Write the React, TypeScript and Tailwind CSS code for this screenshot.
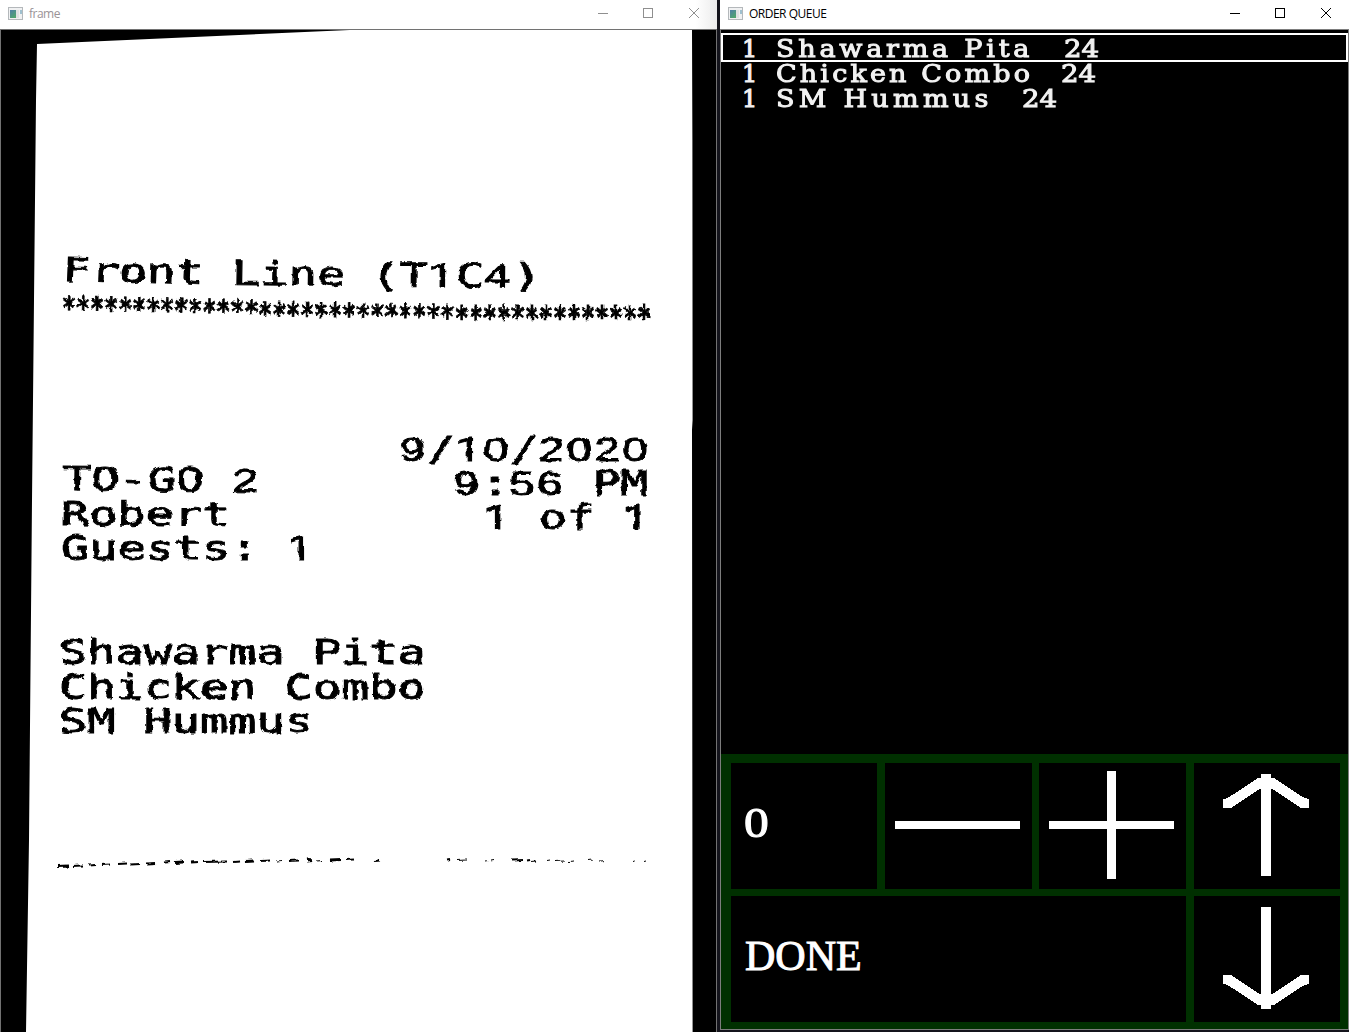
import type { ReactNode } from 'react';

function WindowIcon() {
  return (
    <svg width="16" height="14" viewBox="0 0 16 14" className="shrink-0" shapeRendering="crispEdges">
      <defs>
        <linearGradient id="pane" x1="0" y1="0" x2="0.6" y2="1">
          <stop offset="0" stopColor="#4f7fa8" />
          <stop offset="1" stopColor="#4fa56f" />
        </linearGradient>
      </defs>
      <rect x="0" y="0" width="15" height="13" fill="#b4b8bb" />
      <rect x="1" y="1" width="13" height="11" fill="#f0f1f2" />
      <rect x="2" y="3" width="6" height="8" fill="url(#pane)" />
      <rect x="8" y="3" width="3" height="8" fill="#dfe1e3" />
      <rect x="12" y="3" width="2" height="4" fill="#9fc0cf" />
    </svg>
  );
}

function TitleBar({ title, active }: { title: string; active?: boolean }) {
  return (
    <div
      className={
        active
          ? 'flex h-[29px] shrink-0 items-start bg-white text-black'
          : 'flex h-[29px] shrink-0 items-start bg-[linear-gradient(90deg,#ffffff_97%,#ececec_100%)] text-[#9a9396]'
      }
    >
      <div className="flex h-[27px] items-center gap-[5px] pl-2">
        <WindowIcon />
        <span className='text-[12px] tracking-[-0.5px] font-["Open_Sans",sans-serif]'>{title}</span>
      </div>
      <svg
        width="106"
        height="27"
        viewBox="0 0 106 27"
        className={active ? 'ml-auto mr-[14px]' : 'ml-auto mr-[14px] text-[#8f8f8f]'}
        fill="none"
        stroke="currentColor"
      >
        <path d="M1 13.5H11" />
        <rect x="46.5" y="8.5" width="9" height="9" />
        <path d="M92 8l10 10M102 8l-10 10" />
      </svg>
    </div>
  );
}

/** A run of plain digits, spaced to the pitch of the surrounding monospace text. */
function N({ children }: { children: ReactNode }) {
  return <span className='tracking-[0.046em] font-["Liberation_Sans",sans-serif]'>{children}</span>;
}

/** The digit one, drawn without a foot. */
function One() {
  return <span className='tracking-[0.04em] font-["Roboto",sans-serif]'>1</span>;
}

const print =
  'block w-fit origin-left scale-x-[1.42] whitespace-pre font-["DejaVu_Sans_Mono",monospace] text-[33px] leading-[34.5px] [-webkit-text-stroke:0.9px_black]';
const printRight =
  'block w-fit origin-right scale-x-[1.4] whitespace-pre font-["DejaVu_Sans_Mono",monospace] text-[33px] leading-[34px] [-webkit-text-stroke:0.9px_black]';

const perforation: [number, number, number, number][] = [
  [18, 29, 25, 3], [33, 43, 24.5, 2], [48, 55, 24, 2], [62, 70, 23.5, 2], [78, 87, 22.5, 2], [90, 99, 23, 2],
  [106, 115, 22, 2], [125, 130, 21, 2], [135, 143, 21, 3], [151, 159, 20.5, 3], [163, 187, 20.5, 2],
  [193, 200, 20.5, 2], [206, 214, 20, 3], [221, 230, 19.5, 2], [236, 242, 19.5, 1], [249, 258, 19.5, 2],
  [267, 272, 19, 4], [277, 283, 19.5, 1], [290, 301, 18.5, 3], [306, 314, 18.5, 2], [334, 339, 19.5, 2],
  [408, 411, 19, 2], [417, 426, 19, 1], [445, 448, 19.5, 1], [450, 453, 18.5, 1], [472, 482, 19, 2],
  [487, 490, 19, 2], [491, 496, 19.5, 2], [507, 510, 19, 1], [514, 525, 20, 1], [528, 534, 20, 1],
  [548, 552, 19, 1], [560, 564, 19.5, 1], [592, 594, 20, 1], [605, 607, 20, 1],
];

function FrameWindow() {
  return (
    <section className="flex h-full w-[717px] shrink-0 flex-col">
      <TitleBar title="frame" />
      <div className="relative flex-1 overflow-hidden border-l border-r border-t border-[#727272] bg-black text-black">
        <svg className="absolute left-0 top-0" width="715" height="1002" viewBox="1 30 715 1002">
          <defs>
            <filter id="rough" x="0" y="0" width="100%" height="100%">
              <feTurbulence type="fractalNoise" baseFrequency="0.15" numOctaves="2" seed="4" result="noise" />
              <feDisplacementMap in="SourceGraphic" in2="noise" scale="4" xChannelSelector="R" yChannelSelector="G" />
            </filter>
          </defs>
          <path d="M37 44 L372 29 H692 L692.4 140 L692.6 420 L692 430 L692.6 1032 H26 L29 840 L32 500 L34 300 L36 100Z" fill="#fff" />
        </svg>
        <div className="relative flex flex-col [filter:url(#rough)]">
          <div className="mt-[223px] ml-[61px] h-[36px]">
            <div className={print}>
              <span className="inline-block origin-bottom-left rotate-[1.6deg]">Front</span>
              <span className="inline-block translate-x-[1px] translate-y-[4px] rotate-[0.7deg]"> Line</span>
              <span className="inline-block translate-x-[-1px] translate-y-[6px] rotate-[0.3deg]">
                {' (T'}<One />C<N>4</N>)
              </span>
            </div>
          </div>
          <div className="mt-[4px] ml-[61px] h-[37px]">
            <div className='flex w-fit scale-y-[1.35] whitespace-pre font-["DejaVu_Sans_Mono",monospace] text-[23.3px] font-bold leading-[34px] [-webkit-text-stroke:0.6px_black]'>
              <span className="inline-block rotate-[0.9deg]">**************</span>
              <span className="inline-block translate-y-[4px] rotate-[0.5deg]">**************</span>
              <span className="inline-block translate-y-[5px]">**************</span>
            </div>
          </div>
          <div className="mt-[103px] flex h-[140px] justify-between pl-[60px] pr-[66px]">
            <div className="pt-[29px]">
              <div className={print + ' ml-[2px] rotate-[0.6deg]'}>TO-GO <N>2</N></div>
              <div className={print + ' rotate-[0.3deg]'}>Robert</div>
              <div className={print + ' translate-y-[1px]'}>Guests: <One /></div>
            </div>
            <div className="flex flex-col items-end">
              <div className={printRight}><N>9</N>/<One /><N>0</N>/<N>2020</N></div>
              <div className={printRight + ' -translate-x-[2px]'}><N>9</N>:<N>56</N> PM</div>
              <div className={printRight}><One /> of <One /></div>
            </div>
          </div>
          <div className="mt-[63px] ml-[58px] h-[104px]">
            <div className={print}>Shawarma Pita</div>
            <div className={print}>Chicken Combo</div>
            <div className={print}>SM Hummus</div>
          </div>
          <svg className="mt-[101px] ml-[39px]" width="640" height="50" viewBox="0 0 640 50" stroke="#000">
            {perforation.map(([a, b, y, w]) => (
              <path key={a} d={`M${a} ${y + 0.5}L${b} ${y}`} strokeWidth={w} />
            ))}
          </svg>
        </div>
      </div>
    </section>
  );
}

const orders = [
  { qty: '1', name: 'Shawarma Pita', left: '24', fit: 'w-[288px] tracking-[3.35px]' },
  { qty: '1', name: 'Chicken Combo', left: '24', fit: 'w-[285px] tracking-[2.8px]' },
  { qty: '1', name: 'SM Hummus', left: '24', fit: 'w-[246px] tracking-[3.8px]' },
];

function ArrowUp() {
  return (
    <svg width="146" height="126" viewBox="0 0 146 126" fill="#fff" shapeRendering="crispEdges">
      <path d="M67 13V11H77V15H80L110 35L115 36V45H107L77 25V113H67V25L37 45H29V36L34 35L64 15H67Z" />
      <path d="M65 15L32 36L36 45L72 22L108 45L112 36L79 15Z" />
    </svg>
  );
}

function QueueWindow() {
  return (
    <section className="flex h-full w-[629px] shrink-0 flex-col">
      <TitleBar title="ORDER QUEUE" active />
      <div className="flex h-[1001px] flex-col border border-[#7d7d7d] bg-black pt-[3px] text-[#f2f2f2]">
        <div className='flex flex-col font-["DejaVu_Serif",serif] text-[24px] leading-[25px] [-webkit-text-stroke:1px_#f2f2f2]'>
          {orders.map((o, i) => (
            <div
              key={o.name}
              className={
                i === 0
                  ? 'flex h-[29px] items-start whitespace-pre border-2 border-white pl-[19px] leading-[28px]'
                  : 'flex h-[25px] items-center whitespace-pre pl-[21px]'
              }
            >
              <span className="w-[34px]">{o.qty}</span>
              <span className={o.fit}>
                <span className="inline-block origin-left scale-x-[1.125]">{o.name}</span>
              </span>
              <span className="inline-block origin-left scale-x-[1.15]">{o.left}</span>
            </div>
          ))}
        </div>
        <div className='mt-auto grid h-[275px] grid-cols-[146px_147px_147px_146px] grid-rows-[126px_126px] gap-x-[8px] gap-y-[7px] bg-[#003000] pl-[10px] pt-[9px] font-["Liberation_Serif",serif] text-[42px] leading-none text-white [-webkit-text-stroke:1px_white]'>
          <div className="flex items-center bg-black pb-[6px] pl-[13px]">
            <span className="origin-left scale-x-[1.18]">0</span>
          </div>
          <div className="flex items-center bg-black pl-[10px]">
            <div className="h-[8px] w-[125px] translate-y-[-1px] bg-white" />
          </div>
          <div className="-ml-px mr-px flex bg-black">
            <svg width="147" height="126" viewBox="0 0 147 126" fill="#fff" shapeRendering="crispEdges">
              <path d="M10 58H68V8H77V58H135V66H77V116H68V66H10Z" />
            </svg>
          </div>
          <div className="-ml-px mr-px bg-black"><ArrowUp /></div>
          <div className="col-span-3 mr-px flex items-center bg-black pb-[6px] pl-[14px]">DONE</div>
          <div className="-ml-px mr-px bg-black">
            <div className="-translate-y-[2px] -scale-y-100"><ArrowUp /></div>
          </div>
        </div>
      </div>
    </section>
  );
}

export default function App() {
  return (
    <main className="flex h-[1032px] w-[1349px] overflow-hidden bg-[#14141c]">
      <FrameWindow />
      <div className="w-[3px] shrink-0" />
      <QueueWindow />
    </main>
  );
}
